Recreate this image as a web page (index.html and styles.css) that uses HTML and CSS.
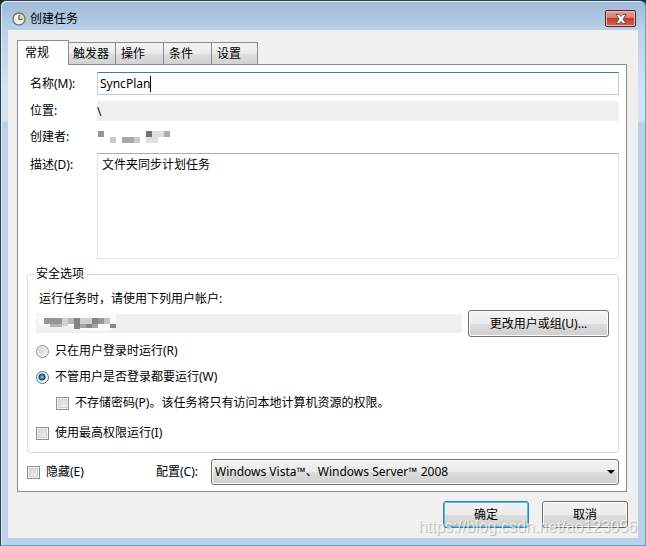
FILE: index.html
```html
<!DOCTYPE html>
<html lang="zh-CN">
<head>
    <meta charset="UTF-8">
    <meta name="viewport" content="width=device-width, initial-scale=1.0">
    <title>创建任务</title>
    <link rel="stylesheet" href="styles.css">
</head>
<body>
    <div class="window">
        <header class="title-bar">
            <svg class="title-icon" width="14" height="14" viewBox="0 0 14 14">
                <circle cx="7" cy="7" r="6" fill="#eef3f6" stroke="#77796f" stroke-width="1.4"/>
                <path d="M7 2a5 5 0 0 1 5 5H7z" fill="#f0d27c"/>
                <path d="M7 3v4.5h3.5" fill="none" stroke="#4d6378" stroke-width="1.2"/>
            </svg>
            <h1 class="title">创建任务</h1>
            <button class="close-btn" type="button" aria-label="关闭">
                <svg width="12" height="10" viewBox="0 0 12 10">
                    <path d="M1 .5h3.300L6 2.600 7.700 .5H11L7.900 5 11 9.500H7.700L6 7.400 4.300 9.500H1L4.100 5z" fill="#fff" stroke="#5c4a50" stroke-width=".9"/>
                </svg>
            </button>
        </header>

        <form class="client">
            <nav class="tabs">
                <button class="tab active" type="button">常规</button>
                <button class="tab tab-tight" type="button">触发器</button>
                <button class="tab" type="button">操作</button>
                <button class="tab" type="button">条件</button>
                <button class="tab tab-last" type="button">设置</button>
            </nav>

            <div class="panel">
                <div class="fields">
                    <label for="name">名称(M):</label>
                    <div class="name-box">
                        <input class="name-input" id="name" type="text" value="SyncPlan" size="1">
                        <span class="caret"></span>
                    </div>

                    <label for="location">位置:</label>
                    <input class="location" id="location" type="text" value="\" readonly>

                    <span class="field-label">创建者:</span>
                    <svg class="mosaic" width="74" height="12" viewBox="0 0 74 12">
                        <path d="M1 0h6v6H1z" fill="#969696"/>
                        <path d="M13 6h6v6h-6zM37 6h6v6h-6z" fill="#cacaca"/>
                        <path d="M25 6h12v6H25z" fill="#a8a8a8"/>
                        <path d="M49 0h6v6h-6z" fill="#747474"/>
                        <path d="M55 0h12v6H55zM49 6h12v6H49z" fill="#e0e0e0"/>
                        <path d="M67 0h6v6h-6z" fill="#adadad"/>
                    </svg>

                    <label class="top-label" for="description">描述(D):</label>
                    <textarea class="description" id="description">文件夹同步计划任务</textarea>
                </div>

                <fieldset class="security">
                    <legend>安全选项</legend>
                    <p class="account-hint">运行任务时，请使用下列用户帐户:</p>
                    <div class="account-row">
                        <div class="account">
                            <svg width="84" height="19" viewBox="0 0 84 19">
                                <path d="M0 4q3-4 8-4h72v9L74 17H46L40 12H4z" fill="#fafafa"/>
                                <path d="M8 4h18v6H8zM62 4h6v6h-6z" fill="#969696"/>
                                <path d="M32 4h6v6h-6zM14 10h12v3H14z" fill="#b5b5b5"/>
                                <path d="M38 4h6v11h-6zM56 4h6v6h-6z" fill="#858585"/>
                                <path d="M26 4h6v8h-6zM44 4h12v6H44z" fill="#d0d0d0"/>
                                <path d="M44 10h6v4h-6zM56 10h6v4h-6z" fill="#a3a3a3"/>
                                <path d="M50 10h6v4h-6zM74 10h6v4h-6z" fill="#888"/>
                                <path d="M68 4h6v6h-6z" fill="#c4c4c4"/>
                            </svg>
                        </div>
                        <button class="btn account-btn" type="button">更改用户或组(U)...</button>
                    </div>
                    <label class="choice"><input type="radio" name="logon">只在用户登录时运行(R)</label>
                    <label class="choice"><input type="radio" name="logon" checked>不管用户是否登录都要运行(W)</label>
                    <label class="choice nested"><input type="checkbox">不存储密码(P)。该任务将只有访问本地计算机资源的权限。</label>
                    <label class="choice highest"><input type="checkbox">使用最高权限运行(I)</label>
                </fieldset>

                <div class="config-row">
                    <label class="choice hidden-choice"><input type="checkbox">隐藏(E)</label>
                    <label class="config-label" for="config">配置(C):</label>
                    <div class="select-box">
                        <select class="config" id="config">
                            <option>Windows Vista™、Windows Server™ 2008</option>
                        </select>
                        <svg class="arrow" width="8" height="4" viewBox="0 0 8 4"><path d="M0 0h8L4 4z"/></svg>
                    </div>
                </div>
            </div>

            <footer class="actions">
                <button class="btn btn-default" type="button">确定</button>
                <button class="btn" type="button">取消</button>
            </footer>
        </form>
        <div class="watermark">https://blog.csdn.net/ao123056</div>
    </div>
</body>
</html>
```
FILE: styles.css
```css
* {
    box-sizing: border-box;
}

body {
    margin: 0;
    background-color: #20272e;
    color: #000;
    font-family: "Noto Sans", "Noto Sans CJK SC", sans-serif;
    font-size: 12px;
    line-height: 18px;
}

button, input, textarea, select {
    font: inherit;
    color: inherit;
    margin: 0;
}

.window {
    position: relative;
    min-height: 100vh;
    display: flex;
    flex-direction: column;
    padding: 0 7px 7px;
    border: 1px solid #27414d;
    border-right-color: #35b6cc;
    border-bottom-color: #35b6cc;
    border-radius: 6px 6px 0 0;
    background: linear-gradient(#a0b9d6 0, #b9d1ea 30px, #d3e3f4 90px, #d3e3f4 119px, #b9d1ea 122px);
    box-shadow: inset 1px 1px 0 #e4eef8;
}

.title-bar {
    display: flex;
    align-items: center;
    height: 29px;
    padding: 6px 2px 0 4px;
}

.title {
    flex: 1;
    margin: 0 0 0 4px;
    font-size: 12px;
    font-weight: normal;
}

.close-btn {
    display: flex;
    align-items: center;
    justify-content: center;
    width: 31px;
    height: 17px;
    padding: 0;
    border: 1px solid #5b2530;
    border-radius: 2px;
    background: linear-gradient(#e3a397 0, #d37b6d 48%, #bd3c2a 50%, #cf6a50 100%);
    box-shadow: inset 0 0 0 1px #e9b8ae;
}

.client {
    flex: 1;
    padding: 10px 11px 10px 9px;
    background-color: #f0f0f0;
}

.tabs {
    display: flex;
    align-items: flex-end;
    height: 25px;
}

.tab {
    width: 48px;
    height: 23px;
    padding: 0 5px;
    border: 1px solid #898c95;
    border-left-width: 0;
    background: linear-gradient(#f3f3f3 0, #ebebeb 50%, #dedede 51%, #d2d2d2 100%);
    text-align: left;
    white-space: nowrap;
}

.tab-tight {
    width: 47px;
    padding: 0 4px;
}

.tab-last {
    width: 46px;
}

.tab.active {
    position: relative;
    width: 52px;
    height: 25px;
    padding: 0 7px 1px;
    border-width: 1px 1px 0;
    background: #fff;
}

.panel {
    margin-top: -1px;
    padding: 7px 7px 6px 9px;
    border: 1px solid #898c95;
    background-color: #fff;
}

.fields {
    display: grid;
    grid-template-columns: 70px 1fr;
    grid-template-rows: 23px 20px 20px 106px;
    row-gap: 6px;
    align-items: center;
}

.fields > label,
.field-label {
    padding-left: 3px;
}

.fields .top-label {
    align-self: start;
    padding-top: 3px;
}

.name-box {
    display: flex;
    align-items: center;
    height: 23px;
    border: 1px solid #b5cfe7;
    border-top-color: #3d7bad;
    border-radius: 1px;
}

.name-input {
    field-sizing: content;
    padding: 0 0 0 2px;
    border: 0;
    outline: 0;
    background: none;
}

.caret {
    width: 1px;
    height: 16px;
    background-color: #000;
}

.location {
    width: 100%;
    height: 20px;
    padding: 0;
    border: 0;
    background-color: #f0f0f0;
}

.description {
    width: 100%;
    height: 106px;
    padding: 2px 4px;
    border: 1px solid #e2e3ea;
    border-top-color: #abadb3;
    resize: none;
}

.security {
    min-width: 0;
    margin: 6px 0 0;
    padding: 7px 9px 10px 8px;
    border: 1px solid #dcdcdc;
    border-radius: 3px;
}

.security legend {
    padding: 0 2px;
    margin-left: -2px;
}

.account-hint {
    margin: 0 0 2px 3px;
}

.account-row {
    display: flex;
    align-items: center;
    gap: 6px;
    margin-bottom: 5px;
}

.account {
    flex: 1;
    height: 19px;
    background-color: #f0f0f0;
}

.btn {
    width: 86px;
    height: 27px;
    padding: 0;
    border: 1px solid #707070;
    border-radius: 3px;
    background: linear-gradient(#f2f2f2 0, #ebebeb 50%, #dddddd 51%, #cfcfcf 100%);
    box-shadow: inset 0 0 0 1px #fafafa;
}

.account-btn {
    width: 141px;
}

.choice {
    display: flex;
    align-items: center;
    height: 18px;
    margin-bottom: 8px;
}

.choice input {
    appearance: none;
    flex: none;
    width: 13px;
    height: 13px;
    margin-right: 6px;
    border: 1px solid #8e8f8f;
    background: linear-gradient(135deg, #cbcfd5, #f6f6f6);
    box-shadow: inset 0 0 0 1px #f4f4f4, inset 0 0 0 2px #d0d3d7;
}

.choice input[type="radio"] {
    border-radius: 50%;
    box-shadow: inset 0 0 0 1px #f4f4f4;
}

.choice input[type="radio"]:checked {
    border-color: #5a6f83;
    background: radial-gradient(circle at 5px 5px, #8ed8f2 0, #2a7cab 2px, #123a5c 3px, #e8eef2 4px);
}

.nested {
    margin-left: 20px;
}

.security .highest {
    margin: 12px 0 0;
}

.config-row {
    display: flex;
    align-items: center;
    margin-top: 6px;
}

.hidden-choice {
    width: 129px;
    margin: 0;
}

.config-label {
    width: 55px;
}

.select-box {
    position: relative;
    flex: 1;
    display: flex;
}

.config {
    appearance: none;
    width: 100%;
    height: 26px;
    padding: 0 20px 0 3px;
    border: 1px solid #707070;
    border-radius: 3px;
    background: linear-gradient(#f2f2f2 0, #ebebeb 50%, #dddddd 51%, #cfcfcf 100%);
    box-shadow: inset 0 0 0 1px #fafafa;
}

.arrow {
    position: absolute;
    top: 11px;
    right: 4px;
    pointer-events: none;
}

.actions {
    display: flex;
    justify-content: flex-end;
    gap: 13px;
    margin: 9px -1px 0 0;
}

.btn-default {
    border-color: #3c7fb1;
    box-shadow: inset 0 0 0 1px #48c4e8;
}

/* site mark printed over the bottom corner */
.watermark {
    position: absolute;
    right: 8px;
    bottom: 9px;
    color: rgba(255, 255, 255, 0.7);
    font-family: "Liberation Sans", sans-serif;
    font-size: 16px;
    text-shadow: 1px 1px 1px rgba(0, 0, 0, 0.25);
    pointer-events: none;
}
```
